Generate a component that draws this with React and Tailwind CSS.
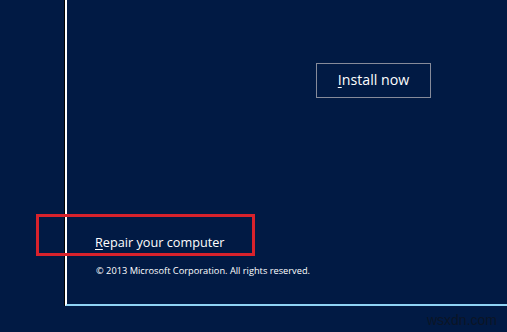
import React from 'react';

const font = { fontFamily: '"Open Sans", "Noto Sans", sans-serif' };

const App = () => {
  return (
    <div className="relative w-[507px] h-[332px] overflow-hidden bg-[#011a44] text-white" style={font}>
      <div className="ml-[65px] h-[306px] border-l-2 border-b-2 border-l-white border-b-[#8fd3f4] shadow-[-1px_0_0_#000] flex flex-col">
        <div className="pt-[63px] pl-[249px]">
          <button className="w-[115px] h-[35px] border border-[#868b9a] text-[14.2px] leading-none text-white flex items-center justify-center">
            <span><span className="underline underline-offset-2">I</span>nstall now</span>
          </button>
        </div>
        <div className="mt-auto pl-[28px] pb-[29px]">
          <div className="text-[12.7px] leading-none mb-[17px]">
            <span className="underline underline-offset-2">R</span>epair your computer
          </div>
          <div className="text-[9.25px] leading-none pl-[1px]">
            © 2013 Microsoft Corporation. All rights reserved.
          </div>
        </div>
      </div>

      {/* red highlight drawn over the screenshot */}
      <div className="absolute left-[36px] top-[214px] w-[219px] h-[42px] border-[3px] border-[#d8222c]" />

      <div className="absolute right-[10px] bottom-[5px] text-[14px] leading-none text-[#0b1526]" style={{ fontFamily: '"Liberation Sans", sans-serif' }}>
        wsxdn.com
      </div>
    </div>
  );
};

export default App;
